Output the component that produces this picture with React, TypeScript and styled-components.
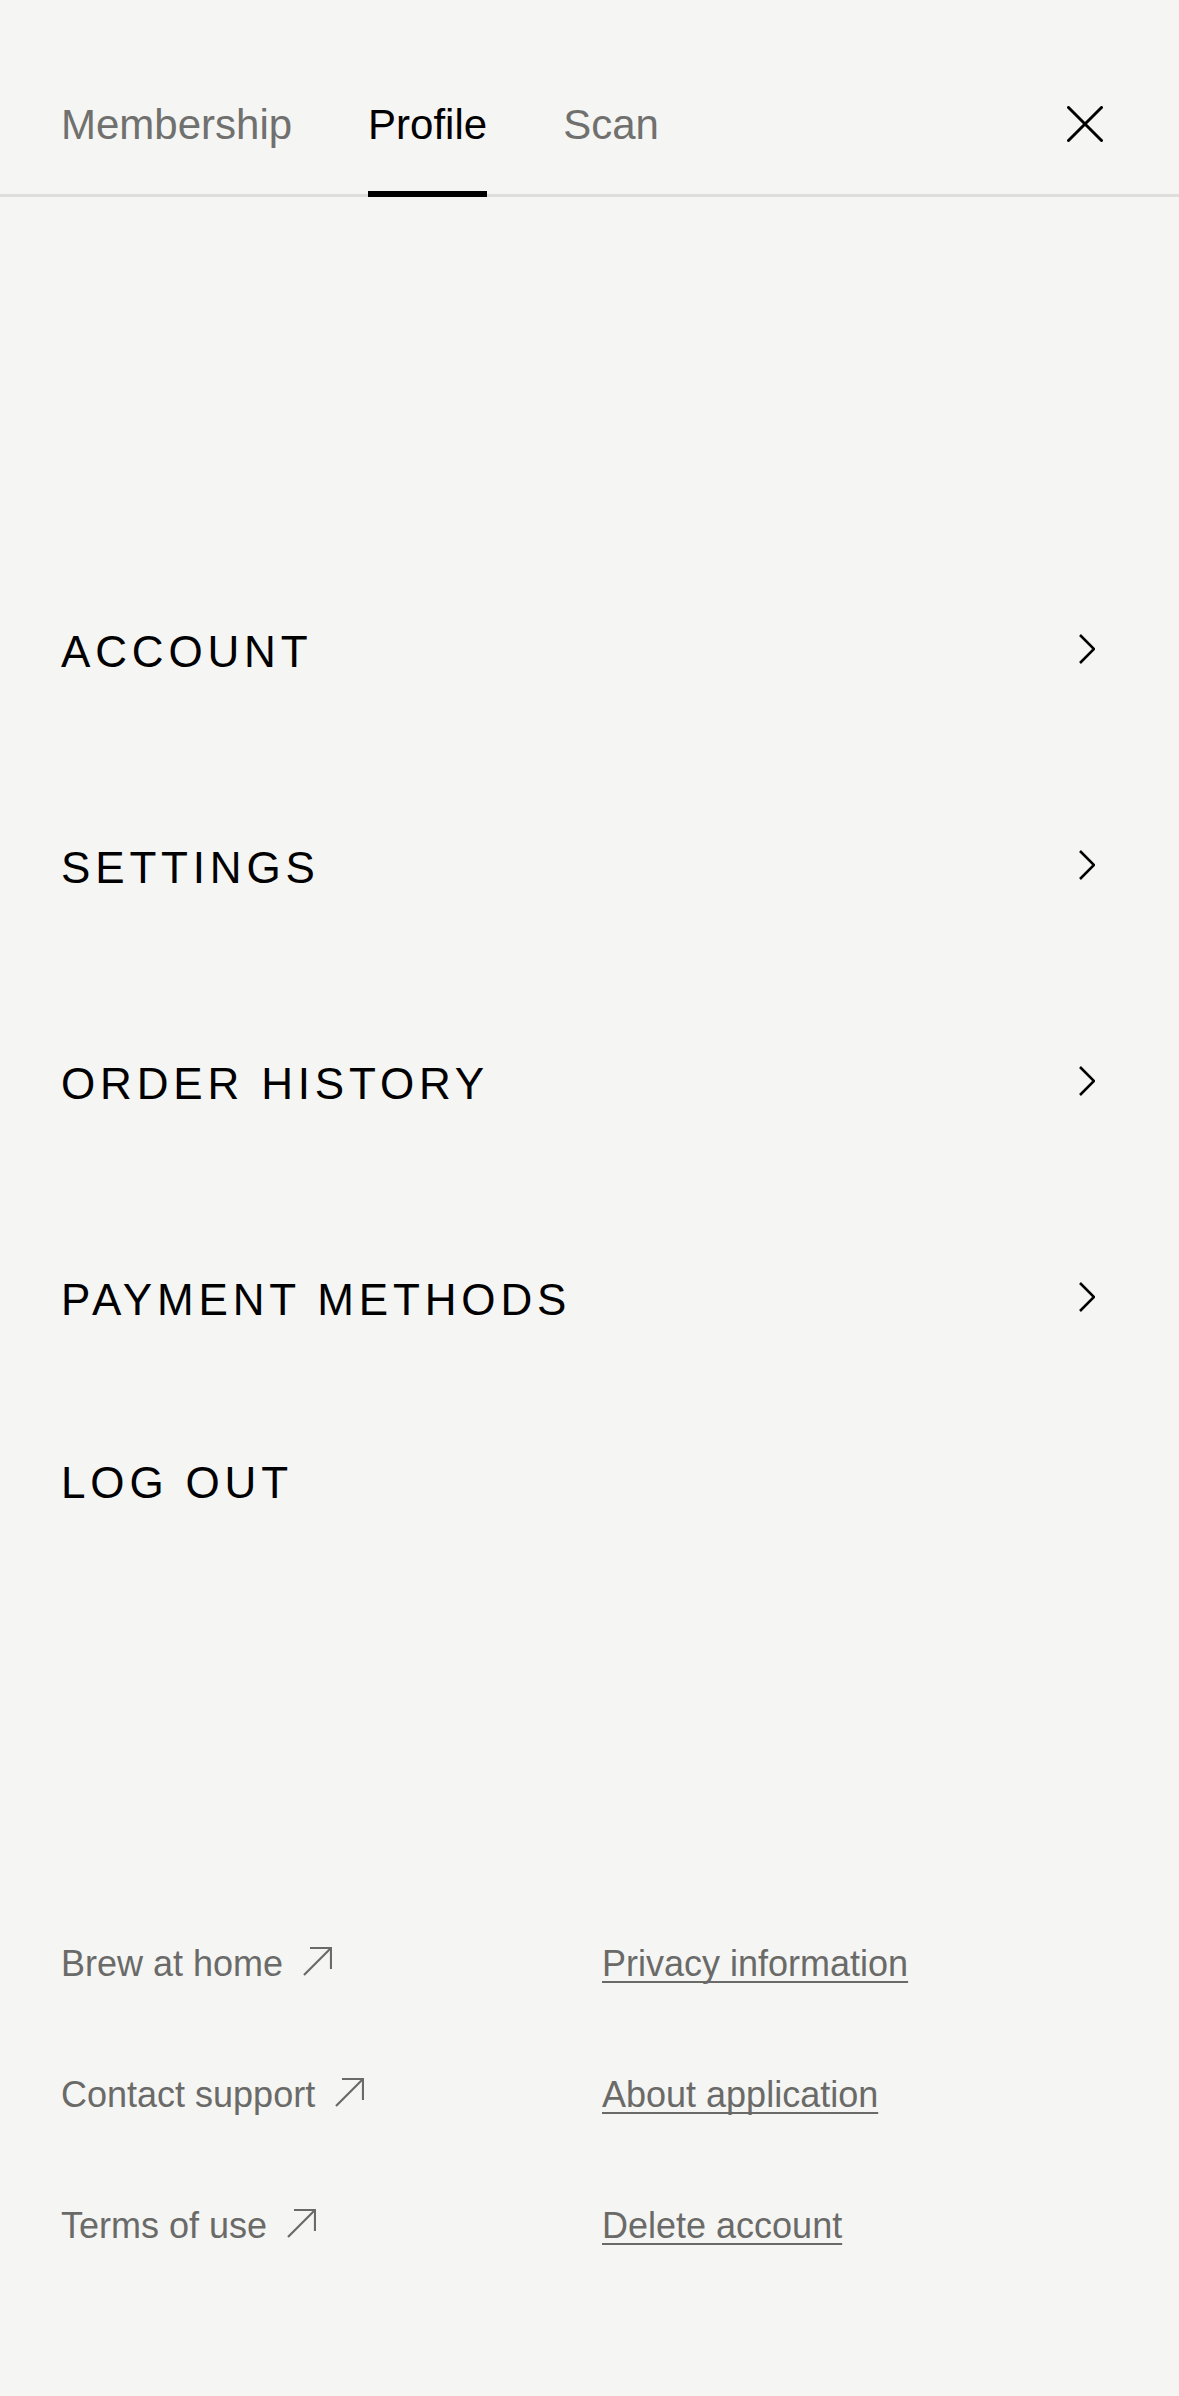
import React from "react";
import styled, { createGlobalStyle } from "styled-components";

const GlobalStyle = createGlobalStyle`
  html, body {
    margin: 0;
    padding: 0;
    background: #f5f5f3;
  }
  body {
    font-family: "Liberation Sans", Arial, sans-serif;
    -webkit-font-smoothing: antialiased;
  }
  * {
    box-sizing: border-box;
  }
`;

const Page = styled.div`
  min-height: 2396px;
  background: #f5f5f3;
  display: flex;
  flex-direction: column;
`;

const Header = styled.header`
  height: 197px;
  display: flex;
  align-items: flex-end;
  justify-content: space-between;
  padding: 0 76px 0 61px;
  border-bottom: 3px solid #dededc;
`;

const Tabs = styled.nav`
  display: flex;
  align-items: flex-end;
  gap: 76px;
`;

const Tab = styled.button<{ $active?: boolean }>`
  appearance: none;
  background: none;
  border: 0;
  padding: 0 0 45px;
  margin: 0 0 -3px;
  font-family: inherit;
  font-size: 42px;
  line-height: 1;
  color: ${(p) => (p.$active ? "#000000" : "#70706e")};
  border-bottom: 6px solid ${(p) => (p.$active ? "#000000" : "transparent")};
  cursor: pointer;
`;

const CloseButton = styled.button`
  appearance: none;
  background: none;
  border: 0;
  padding: 0;
  margin-bottom: 52px;
  width: 36px;
  height: 36px;
  display: flex;
  cursor: pointer;
`;

const Menu = styled.ul`
  list-style: none;
  margin: 347px 0 0;
  padding: 0;
`;

const MenuRow = styled.li<{ $compact?: boolean }>`
  height: ${(p) => (p.$compact ? 150 : 216)}px;
  display: flex;
  align-items: center;
  justify-content: space-between;
  padding: 0 84px 0 61px;
  cursor: pointer;
`;

const MenuLabel = styled.span`
  font-size: 44px;
  line-height: 1;
  letter-spacing: 0.11em;
  text-transform: uppercase;
  color: #000000;
`;

const Chevron = styled.svg`
  width: 16px;
  height: 30px;
  margin-top: -6px;
`;

const Footer = styled.footer`
  margin-top: 340px;
  padding: 0 61px;
  display: grid;
  grid-template-columns: 541px 1fr;
  grid-auto-rows: 131px;
  align-items: center;
`;

const FooterItem = styled.a<{ $underline?: boolean }>`
  display: inline-flex;
  align-items: center;
  justify-self: start;
  gap: 20px;
  font-size: 36px;
  line-height: 1;
  color: #6a6a68;
  text-decoration: ${(p) => (p.$underline ? "underline" : "none")};
  text-decoration-thickness: 2px;
  text-underline-offset: 5px;
  text-decoration-skip-ink: none;
  cursor: pointer;
`;

const ExternalArrow = styled.svg`
  width: 29px;
  height: 29px;
  margin-top: -4px;
`;

const CloseIcon = () => (
  <svg width="36" height="36" viewBox="0 0 36 36" fill="none">
    <path d="M1.5 1.5 L34.5 34.5 M34.5 1.5 L1.5 34.5" stroke="#000" strokeWidth="3" strokeLinecap="round" />
  </svg>
);

const ChevronIcon = () => (
  <Chevron viewBox="0 0 16 30" fill="none">
    <path d="M1 1 L15 15 L1 29" stroke="#000" strokeWidth="2.6" />
  </Chevron>
);

const ArrowIcon = () => (
  <ExternalArrow viewBox="0 0 29 29" fill="none">
    <path d="M1 28 L28 1 M7 1 H28 V22" stroke="#6a6a68" strokeWidth="2.2" />
  </ExternalArrow>
);

const menuItems = ["Account", "Settings", "Order history", "Payment methods"];

const externalLinks = ["Brew at home", "Contact support", "Terms of use"];
const infoLinks = ["Privacy information", "About application", "Delete account"];

export default function App() {
  return (
    <>
      <GlobalStyle />
      <Page>
        <Header>
          <Tabs>
            <Tab>Membership</Tab>
            <Tab $active>Profile</Tab>
            <Tab>Scan</Tab>
          </Tabs>
          <CloseButton aria-label="Close">
            <CloseIcon />
          </CloseButton>
        </Header>

        <Menu>
          {menuItems.map((item) => (
            <MenuRow key={item}>
              <MenuLabel>{item}</MenuLabel>
              <ChevronIcon />
            </MenuRow>
          ))}
          <MenuRow $compact>
            <MenuLabel>Log out</MenuLabel>
          </MenuRow>
        </Menu>

        <Footer>
          {externalLinks.map((label, i) => (
            <React.Fragment key={label}>
              <FooterItem>
                {label}
                <ArrowIcon />
              </FooterItem>
              <FooterItem $underline>{infoLinks[i]}</FooterItem>
            </React.Fragment>
          ))}
        </Footer>
      </Page>
    </>
  );
}
